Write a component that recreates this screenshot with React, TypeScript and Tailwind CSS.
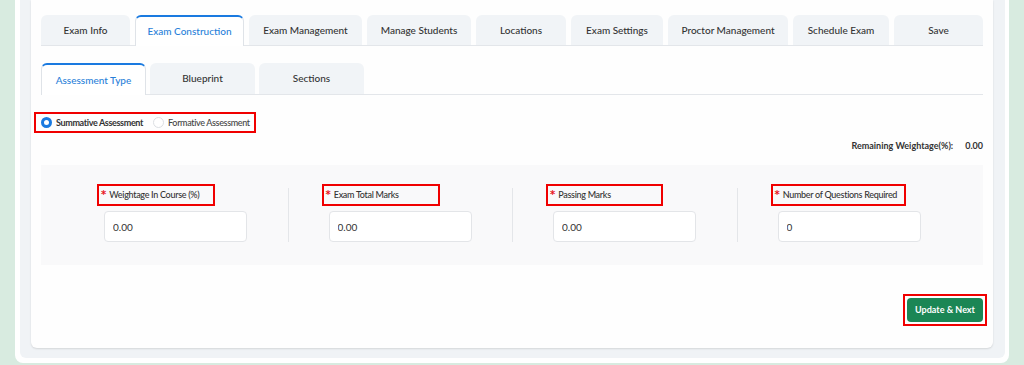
import React, { useState } from 'react';

const mainTabs = [
  { label: 'Exam Info', w: 'w-[89px]' },
  { label: 'Exam Construction', w: 'w-[109px]' },
  { label: 'Exam Management', w: 'w-[113px]' },
  { label: 'Manage Students', w: 'w-[104px]' },
  { label: 'Locations', w: 'w-[90px]' },
  { label: 'Exam Settings', w: 'w-[92px]' },
  { label: 'Proctor Management', w: 'w-[120px]' },
  { label: 'Schedule Exam', w: 'w-[96px]' },
  { label: 'Save', w: 'w-[89px]' },
];

const subTabs = ['Assessment Type', 'Blueprint', 'Sections'];

const fields = [
  { label: 'Weightage In Course (%)', value: '0.00', box: 'w-[118px]' },
  { label: 'Exam Total Marks', value: '0.00', box: 'w-[118px]' },
  { label: 'Passing Marks', value: '0.00', box: 'w-[117px]' },
  { label: 'Number of Questions Required', value: '0', box: 'w-[135px]' },
];

const App: React.FC = () => {
  //* 선택된 탭, 평가 유형
  const [activeTab, setActiveTab] = useState('Exam Construction');
  const [activeSub, setActiveSub] = useState('Assessment Type');
  const [assessment, setAssessment] = useState('summative');

  return (
    <div className="min-h-[365px] bg-[#d8ebe0] px-[15px] pb-[2px] font-['Lato',sans-serif] text-[#333]">
      <div className="bg-white pl-[5px] pr-[4px] pb-[5px] rounded-b-lg">
        <div className="bg-[#f0f3f6] pl-[11px] pr-[12px] pb-[10px] rounded-b-md">
          <div className="bg-[#fefefe] px-[10px] pt-[15px] pb-[22px] rounded-b-md shadow-[0_1px_2px_rgba(0,0,0,0.12)]">
            {/* 상단 탭 */}
            <div className="flex gap-[5px] h-[31px] border-b border-[#e3e6ea]">
              {mainTabs.map((tab) => {
                const active = tab.label === activeTab;
                return (
                  <button
                    key={tab.label}
                    type="button"
                    onClick={() => setActiveTab(tab.label)}
                    className={`${tab.w} shrink-0 flex items-center justify-center rounded-t-md text-[10px] font-medium ${
                      active
                        ? 'bg-white border-x border-t-2 border-[#dfe3e8] border-t-[#1a7ae0] text-[#2a7fd9] h-[31px]'
                        : 'bg-[#f1f4f7] text-[#333] h-[30px]'
                    }`}
                  >
                    {tab.label}
                  </button>
                );
              })}
            </div>

            {/* 하위 탭 */}
            <div className="flex gap-[4px] h-[32px] mt-[17px] border-b border-[#e3e6ea]">
              {subTabs.map((tab) => {
                const active = tab === activeSub;
                return (
                  <button
                    key={tab}
                    type="button"
                    onClick={() => setActiveSub(tab)}
                    className={`w-[105px] shrink-0 flex items-center justify-center rounded-t-md text-[10px] font-medium ${
                      active
                        ? 'bg-white border-x border-t-2 border-[#dfe3e8] border-t-[#1a7ae0] text-[#2a7fd9] h-[32px]'
                        : 'bg-[#f1f4f7] text-[#333] h-[31px]'
                    }`}
                  >
                    {tab}
                  </button>
                );
              })}
            </div>

            {/* 평가 유형 */}
            <div className="flex mt-[17px] -ml-[7px]">
              <div className="flex items-center gap-[4px] h-[21px] pl-[5px] pr-[4px] border-2 border-[#f00000] tracking-[-0.35px]">
                <label
                  className="flex items-center gap-[4px] cursor-pointer"
                  onClick={() => setAssessment('summative')}
                >
                  <span
                    className={`w-[11px] h-[11px] rounded-full bg-white ${
                      assessment === 'summative' ? 'border-[3px] border-[#1a7ae0]' : 'border border-[#dcdfe3]'
                    }`}
                  />
                  <span className="text-[9px] font-bold text-[#333]">Summative Assessment</span>
                </label>
                <label
                  className="flex items-center gap-[4px] ml-[6px] cursor-pointer"
                  onClick={() => setAssessment('formative')}
                >
                  <span
                    className={`w-[11px] h-[11px] rounded-full bg-white ${
                      assessment === 'formative' ? 'border-[3px] border-[#1a7ae0]' : 'border border-[#dcdfe3]'
                    }`}
                  />
                  <span className="text-[9px] font-medium text-[#444]">Formative Assessment</span>
                </label>
              </div>
            </div>

            <div className="flex justify-end items-center gap-[12px] h-[12px] mt-[7px] text-[9px] font-bold text-[#333]">
              <span>Remaining Weightage(%):</span>
              <span>0.00</span>
            </div>

            {/* 입력 영역 */}
            <div className="mt-[13px] bg-[#f9f9fa] px-[22px] pt-[19px] pb-[23px] grid grid-cols-4">
              {fields.map((f, i) => (
                <div key={f.label} className="flex">
                  <div className={`w-px mt-[4px] bg-[#e4e6e9] ${i === 0 ? 'invisible' : ''}`} />
                  <div className="pl-[40px] flex flex-col">
                    <div
                      className={`${f.box} h-[22px] -ml-[7px] flex items-center gap-[3px] pl-[2px] border-2 border-[#f00000] text-[9px] font-medium text-[#333] whitespace-nowrap tracking-[-0.3px]`}
                    >
                      <span className="font-['DejaVu_Sans',sans-serif] text-[#e8141c] text-[10px] leading-none font-bold tracking-normal">
                        *
                      </span>
                      <span>{f.label}</span>
                    </div>
                    <input
                      readOnly
                      value={f.value}
                      className="mt-[5px] w-[143px] h-[31px] rounded-[4px] border border-[#e3e5e8] bg-white px-[8px] text-[10px] text-[#333] outline-none"
                    />
                  </div>
                </div>
              ))}
            </div>

            {/* 업데이트 버튼 */}
            <div className="flex justify-end mt-[29px] -mr-[4px]">
              <div className="flex border-2 border-[#f00000] p-[2px]">
                <button
                  type="button"
                  className="w-[76px] h-[24px] rounded-[4px] bg-[#1b8655] text-white text-[9px] font-bold"
                >
                  Update &amp; Next
                </button>
              </div>
            </div>
          </div>
        </div>
      </div>
    </div>
  );
};

export default App;
